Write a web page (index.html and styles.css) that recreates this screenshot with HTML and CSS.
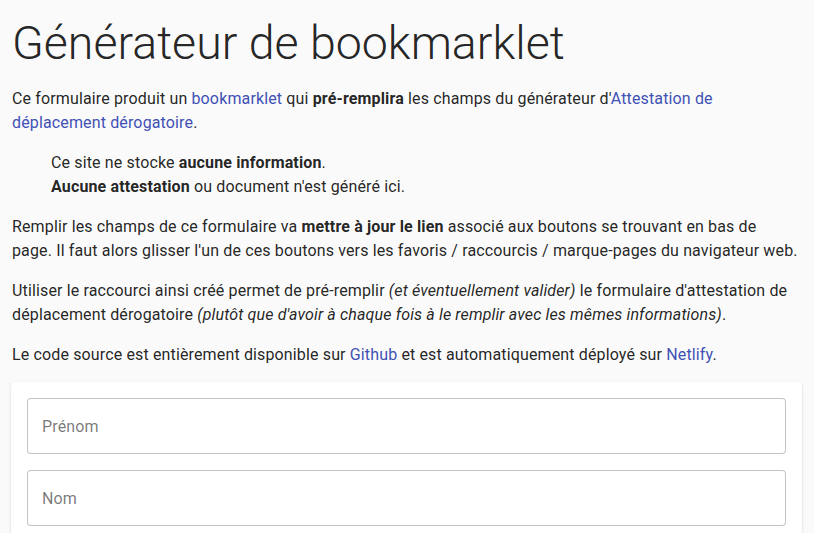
FILE: index.html
```html
<!DOCTYPE html>
<html lang="fr">
<head>
<meta charset="utf-8">
<title>Générateur de bookmarklet</title>
<link rel="stylesheet" href="styles.css">
</head>
<body>
<main class="container">
  <h1 class="title">Générateur de bookmarklet</h1>
  <p>Ce formulaire produit un <a href="#">bookmarklet</a> qui <b>pré-remplira</b> les champs du générateur d'<a href="#">Attestation de déplacement dérogatoire</a>.</p>
  <blockquote class="note">
    Ce site ne stocke <b>aucune information</b>.<br>
    <b>Aucune attestation</b> ou document n'est généré ici.
  </blockquote>
  <p>Remplir les champs de ce formulaire va <b>mettre à jour le lien</b> associé aux boutons se trouvant en bas de page. Il faut alors glisser l'un de ces boutons vers les favoris / raccourcis / marque-pages du navigateur web.</p>
  <p>Utiliser le raccourci ainsi créé permet de pré-remplir <i>(et éventuellement valider)</i> le formulaire d'attestation de déplacement dérogatoire <i>(plutôt que d'avoir à chaque fois à le remplir avec les mêmes informations)</i>.</p>
  <p>Le code source est entièrement disponible sur <a href="#">Github</a> et est automatiquement déployé sur <a href="#">Netlify</a>.</p>
  <form class="card">
    <div class="field"><input type="text" placeholder="Prénom"></div>
    <div class="field"><input type="text" placeholder="Nom"></div>
    <div class="field"><input type="text" placeholder="Date de naissance"></div>
  </form>
</main>
</body>
</html>
```
FILE: styles.css
```css
html, body {
  margin: 0;
  padding: 0;
  background: #fafafa;
}
body {
  font-family: Roboto, "Noto Sans", sans-serif;
  font-size: 16px;
  line-height: 1.5;
  letter-spacing: 0.14px;
  color: rgba(0, 0, 0, 0.87);
}
.container {
  padding: 15px 12px 24px 12px;
}
.title {
  font-size: 46.5px;
  font-weight: 300;
  line-height: 56px;
  letter-spacing: 0;
  margin: 0 0 16px 0;
}
p {
  margin: 16px 0;
  padding-right: 2px;
}
.title + p {
  margin-top: 0;
}
a {
  color: #3f51b5;
  text-decoration: none;
}
b {
  font-weight: 700;
}
.note {
  margin: 16px 0 16px 39px;
}
.card {
  background: #fff;
  border-radius: 4px;
  box-shadow: 0 2px 1px -1px rgba(0,0,0,0.2), 0 1px 1px 0 rgba(0,0,0,0.14), 0 1px 3px 0 rgba(0,0,0,0.12);
  padding: 16px;
  margin: -1px 0 0 -1px;
  display: flex;
  flex-direction: column;
  gap: 16px;
}
.field input {
  box-sizing: border-box;
  width: 100%;
  height: 56px;
  border: 1px solid rgba(0, 0, 0, 0.23);
  border-radius: 4px;
  padding: 0 14px;
  font-family: Roboto, "Noto Sans", sans-serif;
  font-size: 16px;
  letter-spacing: 0.14px;
  color: rgba(0, 0, 0, 0.87);
  background: #fff;
  outline: none;
}
.field input::placeholder {
  color: rgba(0, 0, 0, 0.54);
  opacity: 1;
}
```
